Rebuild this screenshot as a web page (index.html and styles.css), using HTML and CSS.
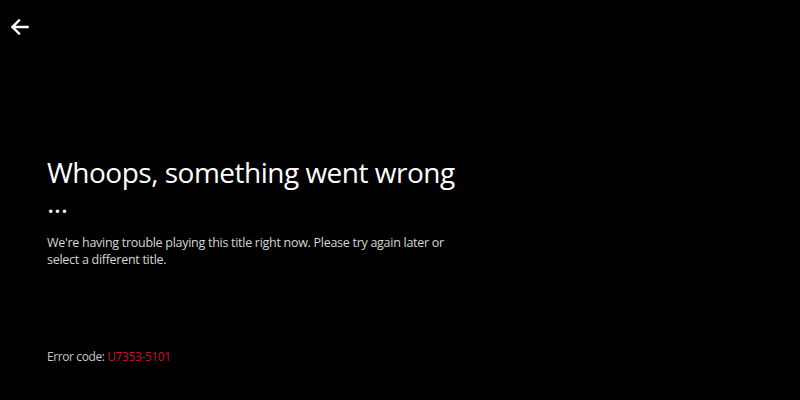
FILE: index.html
```html
<!DOCTYPE html>
<html>
<head>
<meta charset="utf-8">
<link rel="stylesheet" href="styles.css">
</head>
<body>
<div class="page">
  <header class="top">
    <button class="back" aria-label="Back">
      <svg width="18" height="16" viewBox="0 0 18 16"><path d="M8 1.5 L1.5 8 L8 14.5 M1.5 8 H16.5" fill="none" stroke="#fff" stroke-width="2.4" stroke-linecap="square" stroke-linejoin="miter"/></svg>
    </button>
  </header>
  <main class="content">
    <h1 class="title">Whoops, something went wrong ...</h1>
    <p class="message">We're having trouble playing this title right now. Please try again later or select a different title.</p>
  </main>
  <footer class="error">Error code: <span class="code">U7353-5101</span></footer>
</div>
</body>
</html>
```
FILE: styles.css
```css
html, body {
  margin: 0;
  padding: 0;
  background: #000;
}
body {
  font-family: "Open Sans", "Noto Sans", sans-serif;
  color: #fff;
}
.page {
  width: 800px;
  height: 400px;
  display: flex;
  flex-direction: column;
  box-sizing: border-box;
}
.top {
  height: 54px;
  padding: 19px 0 0 11px;
  box-sizing: border-box;
}
.back {
  background: none;
  border: 0;
  padding: 0;
  width: 18px;
  height: 16px;
  display: block;
}
.content {
  padding: 103px 0 0 47px;
}
.title {
  margin: 0;
  width: 430px;
  font-weight: 400;
  font-size: 28px;
  line-height: 30px;
  letter-spacing: -0.5px;
  color: #fff;
}
.message {
  margin: 17px 0 0;
  width: 412px;
  font-size: 12.5px;
  line-height: 17px;
  letter-spacing: -0.28px;
  color: #d6d6d6;
}
.error {
  margin-top: auto;
  padding: 0 0 34px 47px;
  font-size: 12px;
  line-height: 18px;
  letter-spacing: -0.4px;
  color: #c8c8c8;
}
.code {
  color: #c8102e;
}
```
